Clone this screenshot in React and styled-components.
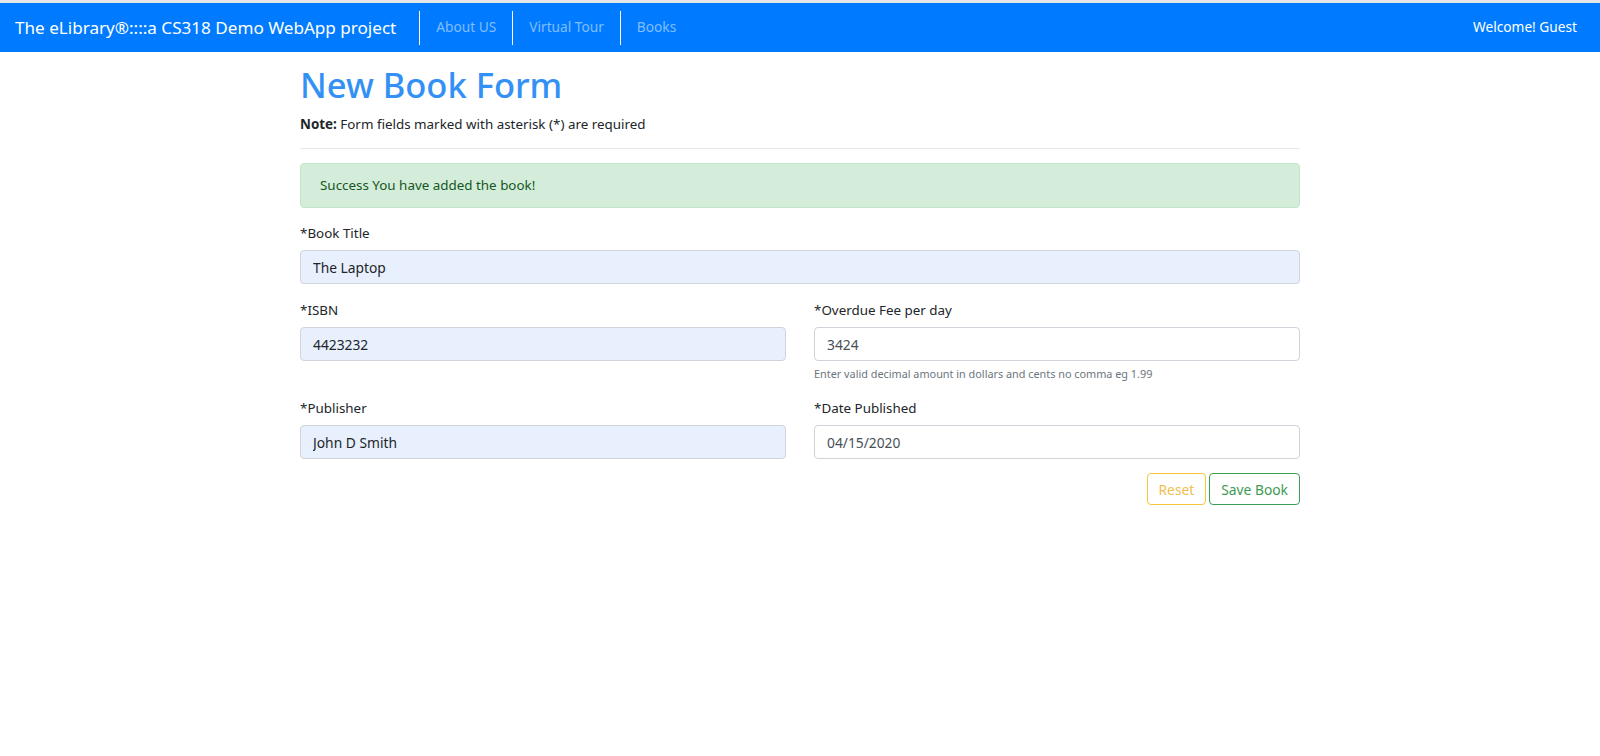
import React from "react";
import styled, { createGlobalStyle } from "styled-components";

const FONT = `"Segoe UI", "Noto Sans", "Open Sans", Arial, sans-serif`;

const Global = createGlobalStyle`
  * { box-sizing: border-box; }
  html, body { margin: 0; padding: 0; background: #fff; }
  body {
    font-family: ${FONT};
    font-size: 13.4px;
    line-height: 1.5;
    color: #212529;
    border-top: 3px solid #e4e6e8;
  }
`;

const Navbar = styled.nav`
  display: flex;
  align-items: center;
  height: 49px;
  background: #007bff;
  padding: 0 23px 0 15px;
`;

const Brand = styled.a`
  font-size: 17.1px;
  line-height: 30px;
  color: #fff;
  white-space: nowrap;
  margin-right: 23px;
`;

const NavList = styled.ul`
  display: flex;
  align-items: center;
  list-style: none;
  margin: 0;
  padding: 0;
  flex: 1;
`;

const NavItem = styled.li`
  border-left: 1px solid #fff;
  height: 34px;
  display: flex;
  align-items: center;
  padding: 0 16px;
`;

const NavLink = styled.a`
  color: rgba(255, 255, 255, 0.5);
  font-size: 13.7px;
  white-space: nowrap;
`;

const Welcome = styled.span`
  color: #fff;
  font-size: 13.7px;
  white-space: nowrap;
`;

const Main = styled.main`
  width: 1000px;
  margin: 0 auto;
  padding-top: 12px;
`;

const Title = styled.h1`
  margin: 0 0 8px;
  font-size: 34.5px;
  font-weight: 500;
  line-height: 42px;
  color: #3391f5;
`;

const Note = styled.p`
  margin: 0 0 14px;
`;

const Rule = styled.hr`
  margin: 0 0 14px;
  border: 0;
  border-top: 1px solid #e5e7ea;
`;

const Alert = styled.div`
  background: #d4edda;
  border: 1px solid #c3e6cb;
  color: #155724;
  border-radius: 4px;
  padding: 11px 19px;
  line-height: 21px;
  margin-bottom: 15px;
`;

const Group = styled.div`
  margin-bottom: 16px;
`;

const Label = styled.label`
  display: block;
  line-height: 21px;
  margin-bottom: 6px;
`;

const Input = styled.input`
  display: block;
  width: 100%;
  height: 34px;
  padding: 6px 12px;
  font-family: ${FONT};
  font-size: 13.8px;
  line-height: 20px;
  color: ${(p) => (p.$filled ? "#212529" : "#495057")};
  background: ${(p) => (p.$filled ? "#e8f0fe" : "#fff")};
  border: 1px solid #ced4da;
  border-radius: 4px;
  outline: none;
`;

const Hint = styled.small`
  display: block;
  margin-top: 4px;
  font-size: 10.85px;
  line-height: 17px;
  color: #6c757d;
`;

const Row = styled.div`
  display: grid;
  grid-template-columns: 1fr 1fr;
  column-gap: 28px;
`;

const Actions = styled.div`
  display: flex;
  justify-content: flex-end;
  gap: 3px;
  margin-top: -2px;
`;

const Button = styled.button`
  height: 32px;
  padding: 0 11px;
  font-family: ${FONT};
  font-size: 13.8px;
  background: transparent;
  border-radius: 4px;
  border: 1px solid ${(p) => p.$color};
  color: ${(p) => p.$text};
`;

export default function App() {
  return (
    <>
      <Global />
      <Navbar>
        <Brand>The eLibrary®::::a CS318 Demo WebApp project</Brand>
        <NavList>
          <NavItem><NavLink>About US</NavLink></NavItem>
          <NavItem><NavLink>Virtual Tour</NavLink></NavItem>
          <NavItem><NavLink>Books</NavLink></NavItem>
        </NavList>
        <Welcome>Welcome! Guest</Welcome>
      </Navbar>
      <Main>
        <Title>New Book Form</Title>
        <Note><strong>Note:</strong> Form fields marked with asterisk (*) are required</Note>
        <Rule />
        <Alert>Success You have added the book!</Alert>
        <Group>
          <Label>*Book Title</Label>
          <Input $filled defaultValue="The Laptop" />
        </Group>
        <Row>
          <Group>
            <Label>*ISBN</Label>
            <Input $filled defaultValue="4423232" />
          </Group>
          <Group>
            <Label>*Overdue Fee per day</Label>
            <Input defaultValue="3424" />
            <Hint>Enter valid decimal amount in dollars and cents no comma eg 1.99</Hint>
          </Group>
          <Group>
            <Label>*Publisher</Label>
            <Input $filled defaultValue="John D Smith" />
          </Group>
          <Group>
            <Label>*Date Published</Label>
            <Input defaultValue="04/15/2020" />
          </Group>
        </Row>
        <Actions>
          <Button $color="#f5c63c" $text="#f0c050">Reset</Button>
          <Button $color="#3a9f52" $text="#3d9a55">Save Book</Button>
        </Actions>
      </Main>
    </>
  );
}
